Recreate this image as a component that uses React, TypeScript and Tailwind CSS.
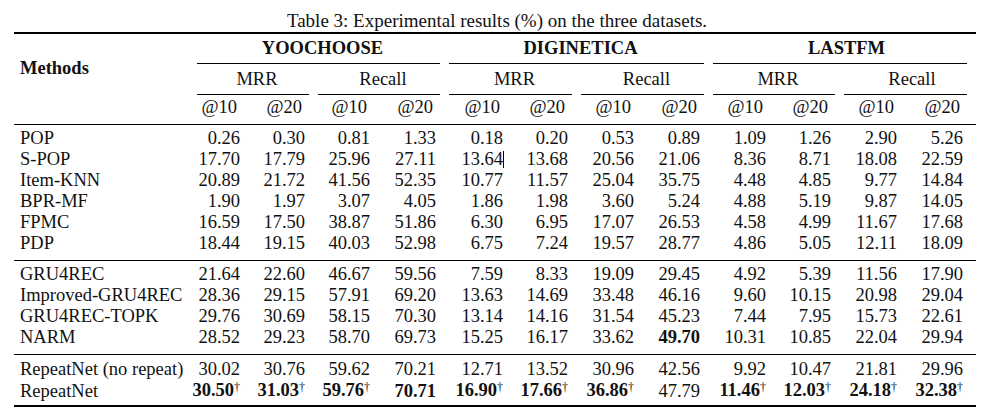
import React, { FC } from "react";

// column template: Methods + 12 metric columns (YOOCHOOSE, DIGINETICA, LASTFM)
const COLS =
  "grid grid-cols-[178px_56px_65px_65px_66px_67px_65px_66px_66px_66px_65px_66px_71px]";

type Row = { name: string; values: string[]; h?: string };

// "*" prefix = bold, trailing "†" = significance mark
const groups: Row[][] = [
  [
    { name: "POP", values: ["0.26", "0.30", "0.81", "1.33", "0.18", "0.20", "0.53", "0.89", "1.09", "1.26", "2.90", "5.26"] },
    { name: "S-POP", values: ["17.70", "17.79", "25.96", "27.11", "13.64", "13.68", "20.56", "21.06", "8.36", "8.71", "18.08", "22.59"] },
    { name: "Item-KNN", values: ["20.89", "21.72", "41.56", "52.35", "10.77", "11.57", "25.04", "35.75", "4.48", "4.85", "9.77", "14.84"] },
    { name: "BPR-MF", values: ["1.90", "1.97", "3.07", "4.05", "1.86", "1.98", "3.60", "5.24", "4.88", "5.19", "9.87", "14.05"] },
    { name: "FPMC", values: ["16.59", "17.50", "38.87", "51.86", "6.30", "6.95", "17.07", "26.53", "4.58", "4.99", "11.67", "17.68"] },
    { name: "PDP", values: ["18.44", "19.15", "40.03", "52.98", "6.75", "7.24", "19.57", "28.77", "4.86", "5.05", "12.11", "18.09"] },
  ],
  [
    { name: "GRU4REC", values: ["21.64", "22.60", "46.67", "59.56", "7.59", "8.33", "19.09", "29.45", "4.92", "5.39", "11.56", "17.90"] },
    { name: "Improved-GRU4REC", values: ["28.36", "29.15", "57.91", "69.20", "13.63", "14.69", "33.48", "46.16", "9.60", "10.15", "20.98", "29.04"] },
    { name: "GRU4REC-TOPK", values: ["29.76", "30.69", "58.15", "70.30", "13.14", "14.16", "31.54", "45.23", "7.44", "7.95", "15.73", "22.61"] },
    { name: "NARM", values: ["28.52", "29.23", "58.70", "69.73", "15.25", "16.17", "33.62", "*49.70", "10.31", "10.85", "22.04", "29.94"] },
  ],
  [
    { name: "RepeatNet (no repeat)", h: "h-[22px]", values: ["30.02", "30.76", "59.62", "70.21", "12.71", "13.52", "30.96", "42.56", "9.92", "10.47", "21.81", "29.96"] },
    { name: "RepeatNet", values: ["*30.50†", "*31.03†", "*59.76†", "*70.71", "*16.90†", "*17.66†", "*36.86†", "47.79", "*11.46†", "*12.03†", "*24.18†", "*32.38†"] },
  ],
];

const Value: FC<{ raw: string }> = ({ raw }) => {
  const bold = raw.startsWith("*");
  const dagger = raw.endsWith("†");
  const num = raw.replace("*", "").replace("†", "");
  return (
    <span className={bold ? "font-bold" : ""}>
      {num}
      {dagger && (
        <span className="relative -top-[5px] text-[12px] font-normal">†</span>
      )}
    </span>
  );
};

const datasets = [
  { name: "YOOCHOOSE", w: "w-[252px]", last: false, subs: ["w-[121px]", "w-[131px]"] },
  { name: "DIGINETICA", w: "w-[264px]", last: false, subs: ["w-[132px]", "w-[132px]"] },
  { name: "LASTFM", w: "w-[268px]", last: true, subs: ["w-[131px]", "w-[137px]"] },
];

const App: FC = () => {
  return (
    <div className="w-[990px] h-[409px] bg-white px-[14px] text-[#111] text-[18.5px] leading-[21px] font-['Liberation_Serif','Times_New_Roman',serif]">
      <div className="h-[32px] pt-[10px] pl-[4px] text-center text-[19px]">
        Table 3: Experimental results (%) on the three datasets.
      </div>

      <div className="border-t-2 border-b-2 border-black">
        {/* header */}
        <div className="flex border-b border-black">
          <div className="w-[178px] pl-[6px] pt-[24px] font-bold">Methods</div>
          <div className="w-[784px]">
            <div className="flex">
              {datasets.map((d) => (
                <div key={d.name} className={`${d.w} h-[30px]`}>
                  <div
                    className={`h-full flex items-center justify-center border-b border-black ml-[5px] pl-[8px] font-bold ${
                      d.last ? "mr-[9px] pl-[13px]" : "mr-[4px]"
                    }`}
                  >
                    {d.name}
                  </div>
                </div>
              ))}
            </div>
            <div className="flex">
              {datasets.map((d) =>
                d.subs.map((w, j) => (
                  <div key={d.name + j} className={`${w} h-[31px]`}>
                    <div
                      className={`h-full flex items-center justify-center border-b border-black ml-[5px] pl-[8px] ${
                        d.last && j === 1 ? "mr-[9px] pl-[13px]" : "mr-[4px]"
                      }`}
                    >
                      {j === 0 ? "MRR" : "Recall"}
                    </div>
                  </div>
                ))
              )}
            </div>
            <div className="grid grid-cols-[56px_65px_65px_66px_67px_65px_66px_66px_66px_65px_66px_71px] h-[29px] pb-[4px] items-center">
              {Array.from({ length: 12 }).map((_, i) => (
                <div
                  key={i}
                  className={`text-right ${i === 11 ? "pr-[16px]" : "pr-[11px]"}`}
                >
                  {i % 2 === 0 ? "@10" : "@20"}
                </div>
              ))}
            </div>
          </div>
        </div>

        {/* body */}
        {groups.map((rows, g) => (
          <div
            key={g}
            className={`pt-[3px] ${
              g === 2 ? "pb-[4px]" : "pb-[6px] border-b border-black"
            }`}
          >
            {rows.map((r) => (
              <div key={r.name} className={`${COLS} ${r.h ?? "h-[21px]"} items-center`}>
                <div className="pl-[6px] whitespace-nowrap">{r.name}</div>
                {r.values.map((v, i) => (
                  <div
                    key={i}
                    className={`relative text-right whitespace-nowrap ${
                      i === 11 ? "pr-[13px]" : "pr-2"
                    }`}
                  >
                    <Value raw={v} />
                    {r.name === "S-POP" && i === 4 && (
                      <span className="absolute right-[7px] top-[2px] w-px h-[17px] bg-black" />
                    )}
                  </div>
                ))}
              </div>
            ))}
          </div>
        ))}
      </div>
    </div>
  );
};

export default App;
